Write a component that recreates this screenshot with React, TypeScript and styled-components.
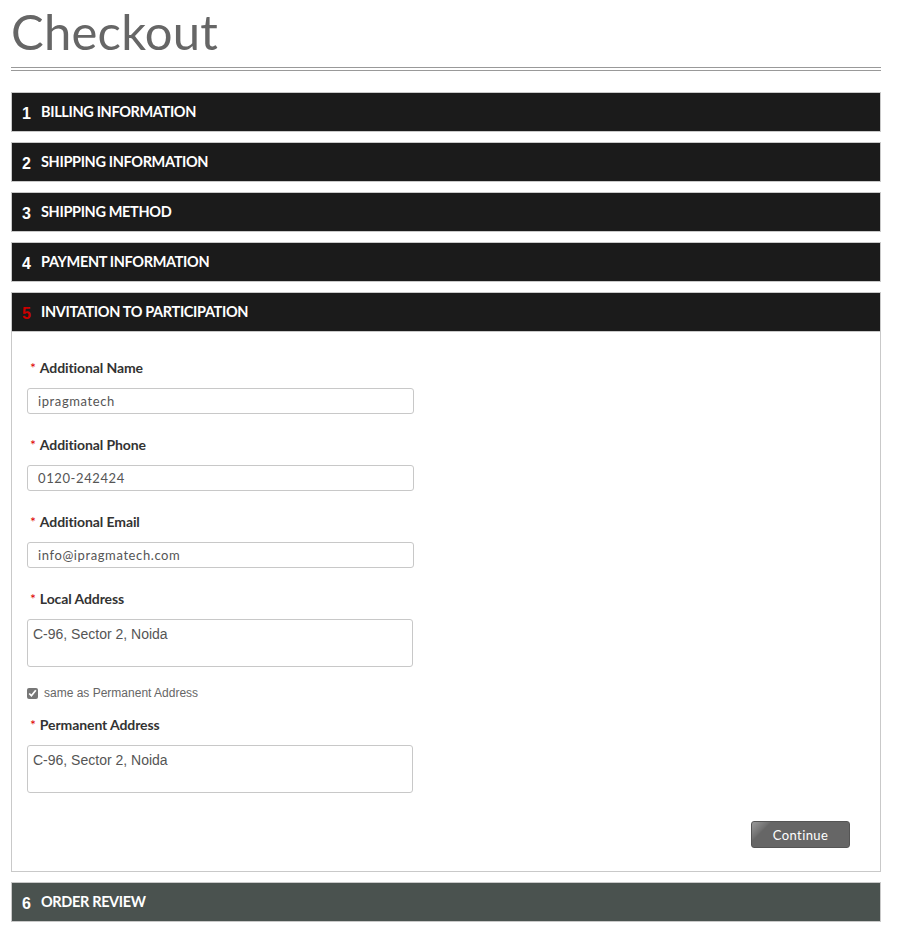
import React from "react";
import styled, { createGlobalStyle } from "styled-components";

const Global = createGlobalStyle`
  html, body { margin: 0; padding: 0; background: #fff; }
  body { font-family: "Lato", "Liberation Sans", sans-serif; }
`;

const Page = styled.div`
  padding: 0 16px 0 11px;
  width: 870px;
`;

const Title = styled.h1`
  margin: 0;
  padding-top: 1px;
  height: 63px;
  font-family: "Lato", sans-serif;
  font-weight: 400;
  font-size: 49px;
  line-height: 60px;
  color: #666;
  letter-spacing: 0.2px;
`;

const Rule = styled.div`
  height: 2px;
  border-top: 1px solid #999;
  border-bottom: 1px solid #999;
  margin-top: 3px;
  margin-bottom: 21px;
`;

const Steps = styled.div`
  display: flex;
  flex-direction: column;
  gap: 10px;
`;

const Step = styled.section``;

const Header = styled.div<{ $muted?: boolean }>`
  display: flex;
  align-items: center;
  height: 38px;
  border: 1px solid #c9c9c9;
  background: ${(p) => (p.$muted ? "#4a524f" : "#1b1b1b")};
  color: #fff;
  padding-left: 10px;
`;

const Num = styled.span<{ $active?: boolean }>`
  font-family: "Liberation Sans", Arial, sans-serif;
  font-weight: 700;
  font-size: 16px;
  width: 19px;
  padding-top: 3px;
  color: ${(p) => (p.$active ? "#c00" : "#fff")};
`;

const HeaderTitle = styled.span`
  font-family: "Lato", sans-serif;
  font-weight: 700;
  font-size: 14.5px;
  letter-spacing: -0.35px;
  text-transform: uppercase;
  padding-bottom: 2px;
`;

const Body = styled.div`
  border: 1px solid #c9c9c9;
  border-top: none;
  padding: 27px 30px 23px 15px;
  display: flex;
  flex-direction: column;
`;

const Field = styled.div`
  display: flex;
  flex-direction: column;
  margin-bottom: 22px;
`;

const Label = styled.label`
  font-family: "Lato", sans-serif;
  font-weight: 700;
  font-size: 14px;
  color: #333;
  margin-left: 3px;
  margin-bottom: 12px;
  letter-spacing: -0.1px;
`;

const Star = styled.span`
  color: #d00;
  margin-right: 4px;
  font-weight: 400;
`;

const Input = styled.input`
  box-sizing: border-box;
  width: 387px;
  height: 26px;
  border: 1px solid #c8c8c8;
  border-radius: 3px;
  padding: 0 10px;
  font-family: "Lato", sans-serif;
  font-size: 13px;
  letter-spacing: 0.6px;
  color: #555;
  outline: none;
`;

const TextArea = styled.textarea`
  box-sizing: border-box;
  width: 386px;
  height: 48px;
  border: 1px solid #c8c8c8;
  border-radius: 3px;
  padding: 5px 5px;
  font-family: "Liberation Sans", Arial, sans-serif;
  font-size: 14px;
  line-height: 18px;
  color: #555;
  resize: none;
  outline: none;
`;

const CheckRow = styled.label`
  display: flex;
  align-items: center;
  gap: 6px;
  margin-top: -3px;
  margin-bottom: 16px;
  font-family: "Liberation Sans", Arial, sans-serif;
  font-size: 12px;
  color: #666;
`;

const Check = styled.input`
  margin: 0;
  width: 11px;
  height: 11px;
  accent-color: #777;
`;

const Actions = styled.div`
  display: flex;
  justify-content: flex-end;
  margin-top: 6px;
`;

const Button = styled.button`
  width: 99px;
  height: 27px;
  border: 1px solid #555;
  border-radius: 3px;
  background: linear-gradient(135deg, #9a9a9a 0%, #707070 14%, #666 16%, #666 100%);
  color: #fff;
  font-family: "Lato", sans-serif;
  font-size: 13px;
  letter-spacing: 0.4px;
  cursor: pointer;
`;

const steps = [
  "Billing Information",
  "Shipping Information",
  "Shipping Method",
  "Payment Information",
];

export default function App() {
  return (
    <>
      <Global />
      <Page>
        <Title>Checkout</Title>
        <Rule />
        <Steps>
          {steps.map((s, i) => (
            <Step key={s}>
              <Header>
                <Num>{i + 1}</Num>
                <HeaderTitle>{s}</HeaderTitle>
              </Header>
            </Step>
          ))}
          <Step>
            <Header>
              <Num $active>5</Num>
              <HeaderTitle>Invitation to Participation</HeaderTitle>
            </Header>
            <Body>
              <Field>
                <Label><Star>*</Star>Additional Name</Label>
                <Input defaultValue="ipragmatech" />
              </Field>
              <Field>
                <Label><Star>*</Star>Additional Phone</Label>
                <Input defaultValue="0120-242424" />
              </Field>
              <Field>
                <Label><Star>*</Star>Additional Email</Label>
                <Input defaultValue="info@ipragmatech.com" />
              </Field>
              <Field>
                <Label><Star>*</Star>Local Address</Label>
                <TextArea defaultValue="C-96, Sector 2, Noida" />
              </Field>
              <CheckRow>
                <Check type="checkbox" defaultChecked />
                same as Permanent Address
              </CheckRow>
              <Field>
                <Label><Star>*</Star>Permanent Address</Label>
                <TextArea defaultValue="C-96, Sector 2, Noida" />
              </Field>
              <Actions>
                <Button>Continue</Button>
              </Actions>
            </Body>
          </Step>
          <Step>
            <Header $muted>
              <Num>6</Num>
              <HeaderTitle>Order Review</HeaderTitle>
            </Header>
          </Step>
        </Steps>
      </Page>
    </>
  );
}
